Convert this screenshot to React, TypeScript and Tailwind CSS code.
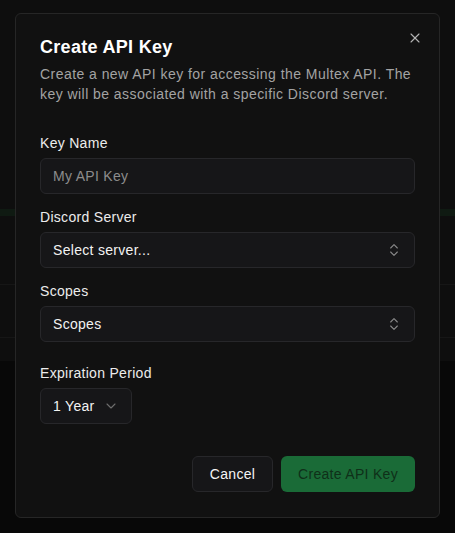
import React from "react";
import { X, ChevronsUpDown, ChevronDown } from "lucide-react";

function Field({ label, children, className = "" }: { label: string; children: React.ReactNode; className?: string }) {
  return (
    <div className={`flex flex-col gap-2 ${className}`}>
      <label className="text-sm font-medium leading-none text-[#ececec]">{label}</label>
      {children}
    </div>
  );
}

function SelectBox({ value }: { value: string }) {
  return (
    <button
      type="button"
      className="flex h-9 w-full items-center justify-between rounded-md border border-[#27272a] bg-[#161618] px-3 text-sm text-[#f2f2f2]"
    >
      <span>{value}</span>
      <ChevronsUpDown className="h-4 w-4 text-[#8a8a8a]" strokeWidth={1.6} />
    </button>
  );
}

export default function App() {
  return (
    <div
      className="relative h-[533px] w-[455px] overflow-hidden bg-[#0e0e0e] tracking-[0.3px]"
      style={{ fontFamily: '"Liberation Sans", Arial, sans-serif' }}
    >
      {/* page behind the overlay */}
      <div className="flex h-full flex-col">
        <div className="h-[209px]" />
        <div className="h-[7px] bg-[#0f1a12]" />
        <div className="h-[69px] border-b border-[#161616]" />
        <div className="h-[53px] border-b border-[#161616]" />
        <div className="h-[23px]" />
        <div className="flex-1 bg-[#080808]" />
      </div>

      {/* dialog */}
      <div className="absolute left-[15px] top-[13px] w-[425px] rounded-md border border-[#262626] bg-[#111111] px-6 pt-6 pb-[25px]">
        <button type="button" className="absolute right-4 top-4 text-[#b5b5b5]">
          <X className="h-4 w-4" strokeWidth={1.6} />
        </button>

        <h2 className="text-lg font-bold leading-none text-white">Create API Key</h2>
        <p className="mt-2 text-sm leading-5 tracking-[0.45px] text-[#a3a3a3]">
          Create a new API key for accessing the Multex API. The key will be associated with a specific Discord server.
        </p>

        <div className="mt-8 flex flex-col">
          <Field label="Key Name">
            <input
              type="text"
              placeholder="My API Key"
              className="h-9 w-full rounded-md border border-[#27272a] bg-[#161618] px-3 text-sm text-white placeholder:text-[#8c8c8c] focus:outline-none"
            />
          </Field>
          <Field label="Discord Server" className="mt-4">
            <SelectBox value="Select server..." />
          </Field>
          <Field label="Scopes" className="mt-4">
            <SelectBox value="Scopes" />
          </Field>
          <Field label="Expiration Period" className="mt-[24px]">
            <button
              type="button"
              className="flex h-9 w-[92px] items-center justify-between whitespace-nowrap rounded-md border border-[#27272a] bg-[#161618] px-3 text-sm text-[#f2f2f2]"
            >
              <span>1 Year</span>
              <ChevronDown className="h-4 w-4 text-[#6e6e6e]" strokeWidth={1.6} />
            </button>
          </Field>
        </div>

        <div className="mt-8 flex justify-end gap-2">
          <button
            type="button"
            className="h-9 w-[81px] rounded-md border border-[#27272a] bg-[#161618] text-sm font-medium text-[#f5f5f5]"
          >
            Cancel
          </button>
          <button
            type="button"
            className="h-9 w-[134px] rounded-md bg-[#1a6b37] text-sm text-[#0f3019]"
          >
            Create API Key
          </button>
        </div>
      </div>
    </div>
  );
}
